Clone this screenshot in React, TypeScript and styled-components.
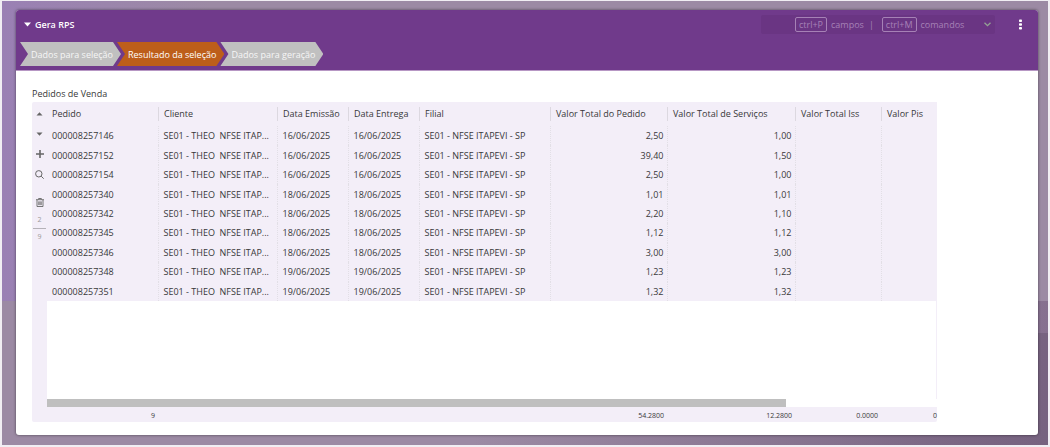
import React from 'react';
import styled, { createGlobalStyle } from 'styled-components';

const GlobalStyle = createGlobalStyle`
  * { box-sizing: border-box; }
  body {
    margin: 0;
    background: #f1eef3;
    font-family: "Open Sans", "Segoe UI", sans-serif;
    font-size: 9px;
    line-height: 14px;
    color: #383838;
  }
  button, input { font: inherit; color: inherit; }
`;

const Page = styled.div`
  min-height: 100vh;
  display: flex;
  padding: 1px 2px 2px;
`;

const Backdrop = styled.div`
  flex: 1;
  min-width: 0;
  display: flex;
  padding: 9px 10px 10px 14px;
  background:
    linear-gradient(to right, #9a80b4 0, #9a80b400 20%) top / 100% 300px no-repeat,
    linear-gradient(to right, #77638000 45%, #776380 100%) bottom / 100% 112px no-repeat,
    linear-gradient(to right, #86708f00 80%, #86708f 100%) bottom / 100% 144px no-repeat,
    #9c8aa4;
`;

const Window = styled.main`
  flex: 1;
  min-width: 0;
  display: flex;
  flex-direction: column;
  background: #fff;
  border-radius: 3px;
  box-shadow: 0 0 3px #00000088;
  overflow: hidden;
`;

const Header = styled.header`
  background: #703a8b;
  border-bottom: 1px solid #b797c4;
  color: #fff;
  padding: 5px 12px 4px 4px;
`;

const TitleBar = styled.div`
  display: flex;
  align-items: center;
  height: 19px;
  margin-bottom: 8px;
`;

const Title = styled.h1`
  flex: 1;
  margin: 0;
  display: flex;
  align-items: center;
  gap: 4px;
  padding-left: 4px;
  font-size: 9px;
  font-weight: 600;
`;

const CommandBox = styled.button`
  display: flex;
  align-items: center;
  width: 234px;
  height: 19px;
  padding: 0 4px 0 34px;
  border: 0;
  border-radius: 2px;
  background: #6a3583;
  color: #a681b6;
  gap: 4px;
`;

const Key = styled.kbd`
  font: inherit;
  line-height: 13px;
  padding: 0 3px;
  border: 1px solid #a681b6;
  border-radius: 2px;
`;

const Divider = styled.span`
  margin: 0 4px 0 1px;
`;

const CommandArrow = styled.svg`
  margin-left: auto;
`;

const MenuButton = styled.button`
  display: flex;
  justify-content: center;
  width: 12px;
  margin-left: 19px;
  padding: 0;
  border: 0;
  background: none;
`;

const Steps = styled.nav`
  display: flex;
`;

const Step = styled.button<{ $active?: boolean }>`
  height: 24px;
  padding: 2px 8px 0 11px;
  margin-right: -4px;
  border: 0;
  color: ${p => (p.$active ? '#fff' : '#f6f6f6')};
  background: ${p => (p.$active ? '#bd5e1a' : '#c0c0c0')};
  clip-path: polygon(0 0, calc(100% - 8px) 0, 100% 50%, calc(100% - 8px) 100%, 0 100%, 8px 50%);
`;

const Content = styled.section`
  flex: 1;
  display: flex;
  flex-direction: column;
  padding: 15px 101px 13px 16px;
`;

const GridTitle = styled.h2`
  margin: 0;
  height: 16px;
  line-height: 16px;
  font-size: 9px;
  font-weight: 400;
`;

const Grid = styled.div`
  flex: 1;
  display: flex;
  background: #f3eef8;
  border-radius: 2px;
`;

const Toolbar = styled.div`
  width: 15px;
  display: flex;
  flex-direction: column;
  align-items: center;
  padding-top: 2px;
`;

const ToolButton = styled.button<{ $spaced?: boolean }>`
  display: flex;
  align-items: center;
  justify-content: center;
  width: 15px;
  height: 20px;
  margin-top: ${p => (p.$spaced ? 8 : 0)}px;
  padding: 0;
  border: 0;
  background: none;
  color: #666;
`;

const Counter = styled.div`
  width: 13px;
  text-align: center;
  font-size: 7px;
  line-height: 16px;
  color: #999;
`;

const CounterTop = styled.div`
  border-bottom: 1px solid #b5b2b8;
`;

const GridMain = styled.div`
  flex: 1;
  min-width: 0;
  display: flex;
  flex-direction: column;
`;

const Viewport = styled.div`
  flex: 1;
  overflow: hidden;
  background: #fff;
  border-right: 1px solid #f3eef8;
`;

const Table = styled.table`
  table-layout: fixed;
  width: 100%;
  height: 199px;
  border-collapse: collapse;
  background: #f3eef8;
`;

const HeadCell = styled.th`
  height: 24px;
  padding: 0;
  text-align: left;
  font-weight: 400;
  white-space: nowrap;
  &:not(:first-child) > span { border-left: 1px solid #dcd8e0; }
`;

const HeadLabel = styled.span`
  display: block;
  padding-left: 5px;
`;

const Cell = styled.td<{ $right?: boolean }>`
  padding: 1px ${p => (p.$right ? 3 : 5)}px 0 5px;
  text-align: ${p => (p.$right ? 'right' : 'left')};
  white-space: pre;
  &:not(:first-child) { border-left: 1px dotted #e2dfe6; }
`;

const ScrollTrack = styled.div`
  background: #fff;
`;

const ScrollThumb = styled.div`
  width: 83%;
  height: 8px;
  background: #bfbfbf;
`;

const Totals = styled.table`
  table-layout: fixed;
  width: 100%;
  height: 15px;
  border-collapse: collapse;
  font-size: 7px;
  line-height: 12px;
`;

const TotalCell = styled.td`
  padding: 2px 3px 0 0;
  text-align: right;
  &:last-child { padding-right: 0; }
`;

const columns = [
  { label: 'Pedido', width: 111 },
  { label: 'Cliente', width: 119 },
  { label: 'Data Emissão', width: 71 },
  { label: 'Data Entrega', width: 71 },
  { label: 'Filial', width: 131 },
  { label: 'Valor Total do Pedido', width: 117, right: true },
  { label: 'Valor Total de Serviços', width: 128, right: true },
  { label: 'Valor Total Iss', width: 86, right: true },
  { label: 'Valor Pis', right: true },
];

const orders = [
  ['000008257146', '16/06/2025', '2,50', '1,00'],
  ['000008257152', '16/06/2025', '39,40', '1,50'],
  ['000008257154', '16/06/2025', '2,50', '1,00'],
  ['000008257340', '18/06/2025', '1,01', '1,01'],
  ['000008257342', '18/06/2025', '2,20', '1,10'],
  ['000008257345', '18/06/2025', '1,12', '1,12'],
  ['000008257346', '18/06/2025', '3,00', '3,00'],
  ['000008257348', '19/06/2025', '1,23', '1,23'],
  ['000008257351', '19/06/2025', '1,32', '1,32'],
];

const totals = ['9', '', '', '', '', '54.2800', '12.2800', '0.0000', '0'];

const Columns = () => (
  <colgroup>
    {columns.map(c => <col key={c.label} width={c.width} />)}
  </colgroup>
);

export default function App() {
  return (
    <>
      <GlobalStyle />
      <Page>
        <Backdrop>
          <Window>
            <Header>
              <TitleBar>
                <Title>
                  <svg width="7" height="5" viewBox="0 0 7 5" aria-hidden="true"><path d="M0 0.5h7L3.5 4.5z" fill="#fff" /></svg>
                  Gera RPS
                </Title>
                <CommandBox type="button">
                  <Key>ctrl+P</Key>campos<Divider>|</Divider><Key>ctrl+M</Key>comandos
                  <CommandArrow width="7" height="5" viewBox="0 0 7 5" fill="none" stroke="#94a294" strokeWidth="1.3" aria-hidden="true"><path d="M0.5 0.7l3 3 3-3" /></CommandArrow>
                </CommandBox>
                <MenuButton type="button" aria-label="Menu">
                  <svg width="3" height="11" viewBox="0 0 3 11" fill="#fff" aria-hidden="true">
                    <rect y="0.5" width="3" height="2.6" rx="0.8" /><rect y="4.2" width="3" height="2.6" rx="0.8" /><rect y="7.9" width="3" height="2.6" rx="0.8" />
                  </svg>
                </MenuButton>
              </TitleBar>
              <Steps>
                <Step type="button">Dados para seleção</Step>
                <Step type="button" $active aria-current="step">Resultado da seleção</Step>
                <Step type="button">Dados para geração</Step>
              </Steps>
            </Header>
            <Content>
              <GridTitle>Pedidos de Venda</GridTitle>
              <Grid>
                <Toolbar>
                  <ToolButton type="button" aria-label="Anterior">
                    <svg width="7" height="4" viewBox="0 0 7 4" fill="currentColor"><path d="M0.5 3.5h6L3.5 0.3z" /></svg>
                  </ToolButton>
                  <ToolButton type="button" aria-label="Próximo">
                    <svg width="7" height="4" viewBox="0 0 7 4" fill="currentColor"><path d="M0.5 0.5h6L3.5 3.7z" /></svg>
                  </ToolButton>
                  <ToolButton type="button" aria-label="Adicionar">
                    <svg width="8" height="8" viewBox="0 0 8 8" stroke="currentColor" strokeWidth="1.6"><path d="M4 0v8M0 4h8" /></svg>
                  </ToolButton>
                  <ToolButton type="button" aria-label="Pesquisar">
                    <svg width="9" height="9" viewBox="0 0 9 9" fill="none" stroke="currentColor"><circle cx="3.8" cy="3.8" r="3.2" /><path d="M6.2 6.2L8.7 8.7" /></svg>
                  </ToolButton>
                  <ToolButton type="button" $spaced aria-label="Excluir">
                    <svg width="8" height="9" viewBox="0 0 8 9" fill="none" stroke="currentColor" strokeWidth="0.9"><path d="M0 1.7h8M2.6 1.5V.5h2.8v1M1 2v6.5h6V2M2.8 3.4v3.7M4 3.4v3.7M5.2 3.4v3.7" /></svg>
                  </ToolButton>
                  <Counter><CounterTop>2</CounterTop><div>9</div></Counter>
                </Toolbar>
                <GridMain>
                  <Viewport>
                    <Table>
                      <Columns />
                      <thead>
                        <tr>{columns.map(c => <HeadCell key={c.label} scope="col"><HeadLabel>{c.label}</HeadLabel></HeadCell>)}</tr>
                      </thead>
                      <tbody>
                        {orders.map(([id, date, total, services]) => (
                          <tr key={id}>
                            {[id, 'SE01 - THEO  NFSE ITAP...', date, date, 'SE01 - NFSE ITAPEVI - SP', total, services, '', ''].map((v, i) => (
                              <Cell key={columns[i].label} $right={columns[i].right}>{v}</Cell>
                            ))}
                          </tr>
                        ))}
                      </tbody>
                    </Table>
                  </Viewport>
                  <ScrollTrack><ScrollThumb /></ScrollTrack>
                  <Totals>
                    <Columns />
                    <tbody><tr>{totals.map((v, i) => <TotalCell key={columns[i].label}>{v}</TotalCell>)}</tr></tbody>
                  </Totals>
                </GridMain>
              </Grid>
            </Content>
          </Window>
        </Backdrop>
      </Page>
    </>
  );
}
